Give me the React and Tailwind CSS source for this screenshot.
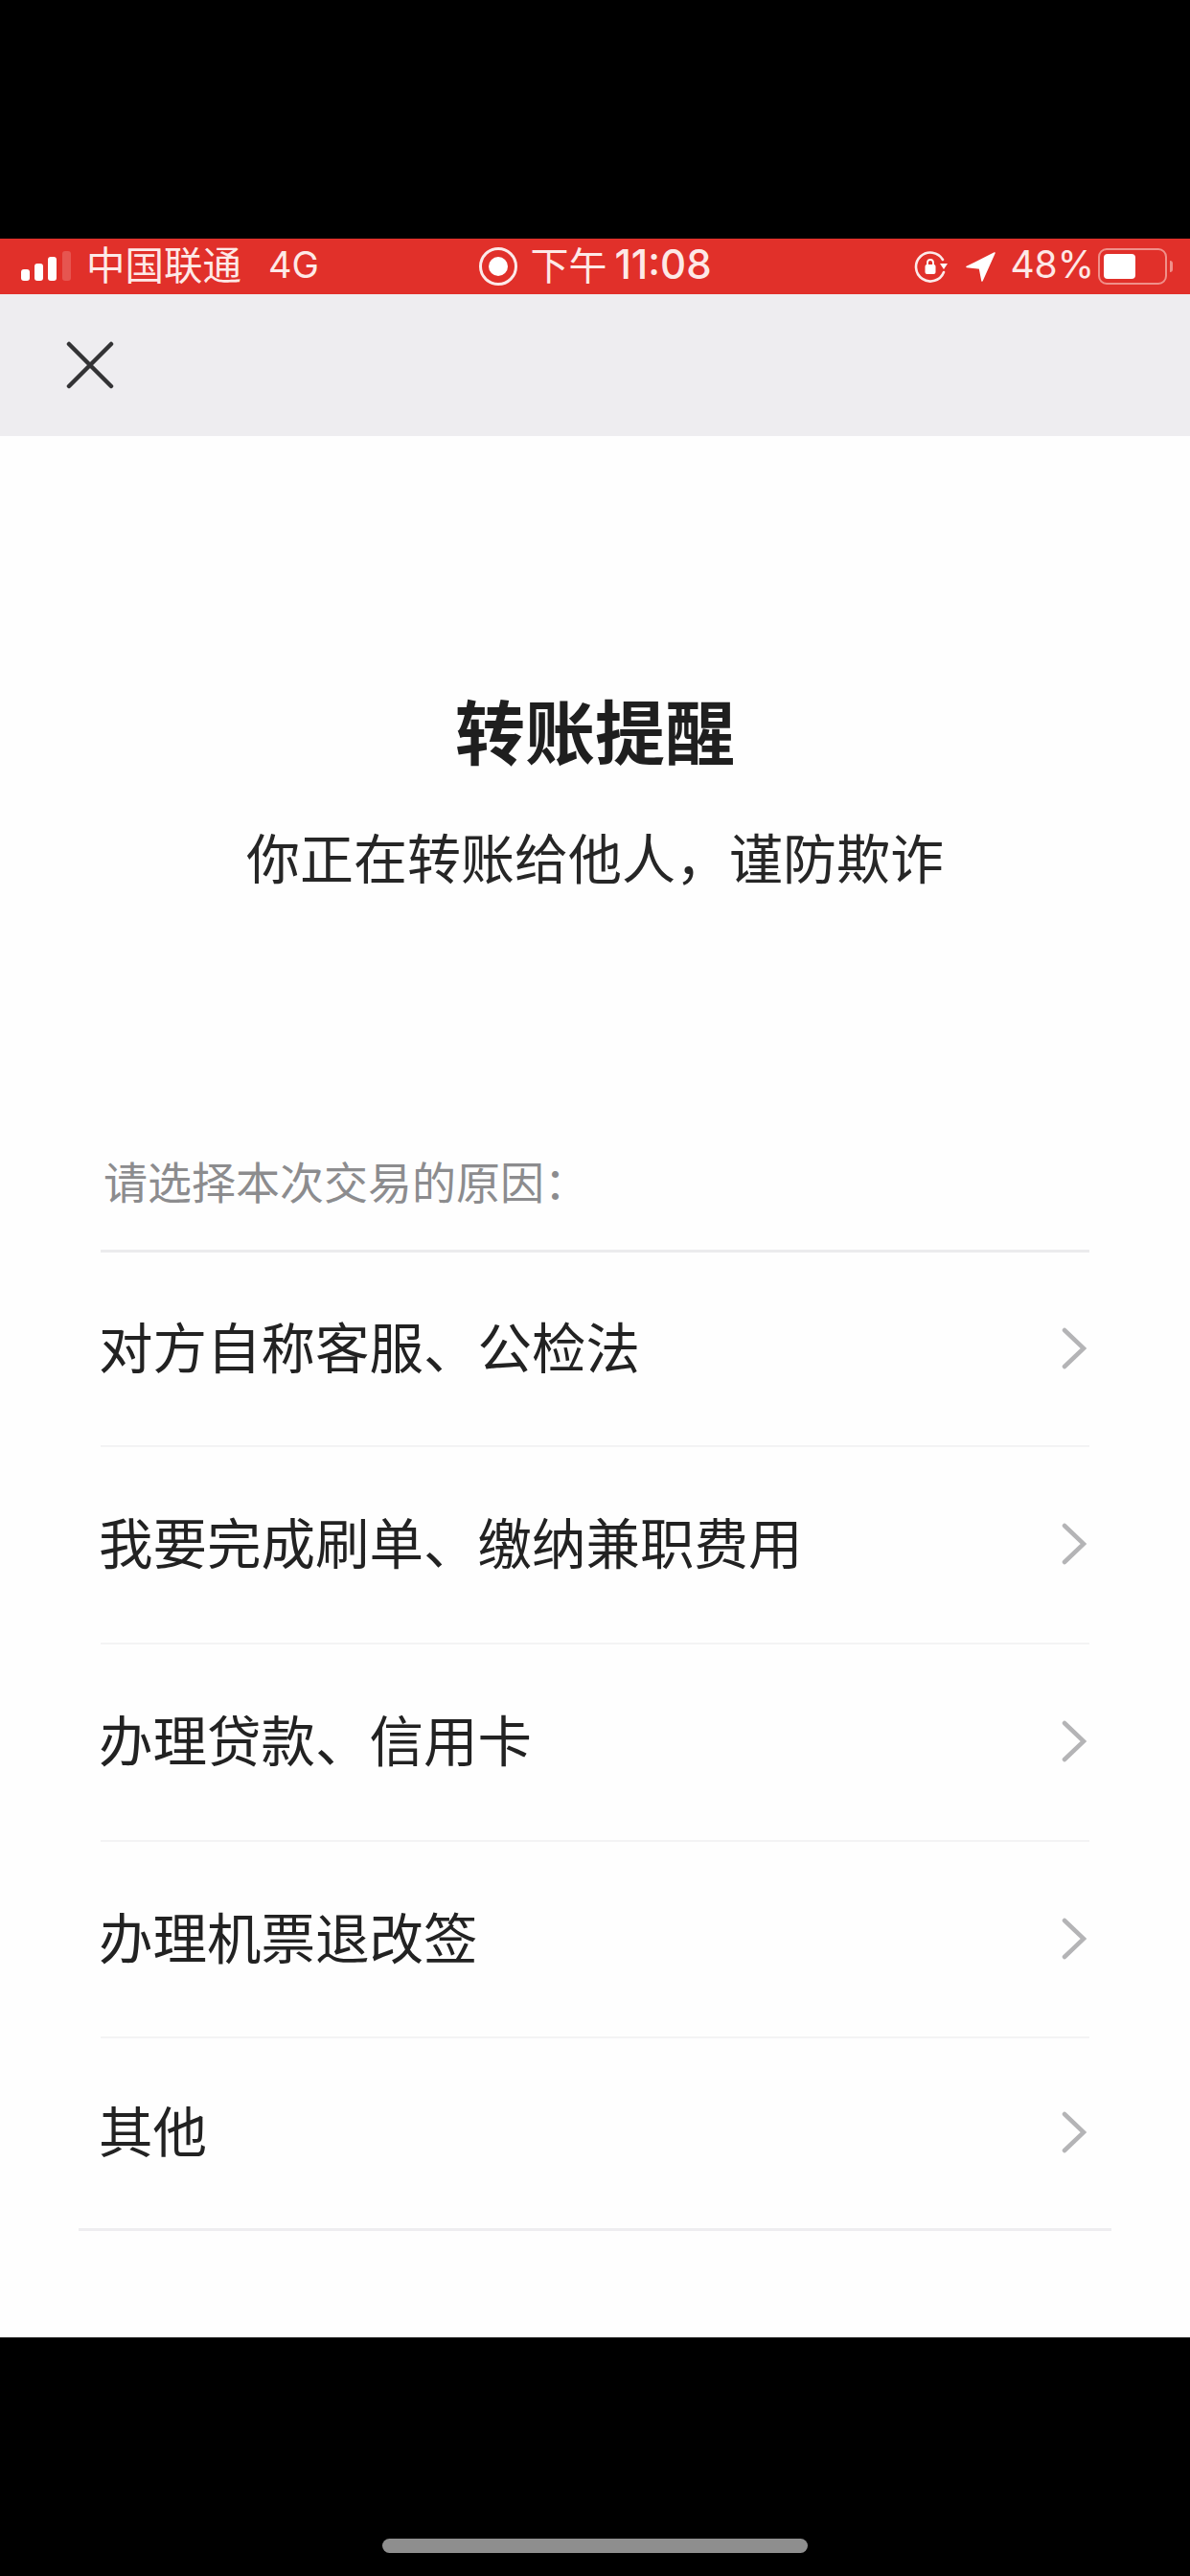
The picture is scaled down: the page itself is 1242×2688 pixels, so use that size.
const font = { fontFamily: '"Noto Sans CJK SC", "Noto Sans", sans-serif' };
const digits = { fontFamily: 'Inter, "Noto Sans CJK SC", sans-serif' };

const rows = [
  { label: "对方自称客服、公检法", cls: "h-[203px] border-b-2" },
  { label: "我要完成刷单、缴纳兼职费用", cls: "h-[206px] border-b-2" },
  { label: "办理贷款、信用卡", cls: "h-[206px] border-b-2" },
  { label: "办理机票退改签", cls: "h-[205px] border-b-2" },
  { label: "其他", cls: "h-[198px]" },
];

function Signal() {
  return (
    <svg width="56" height="32" viewBox="0 0 56 32">
      <rect x="0" y="19" width="9" height="12" rx="3" fill="#fff" />
      <rect x="14" y="13" width="9" height="18" rx="3" fill="#fff" />
      <rect x="28" y="6" width="9" height="25" rx="3" fill="#fff" />
      <rect x="43" y="0" width="9" height="31" rx="3" fill="#fff" fillOpacity="0.18" />
    </svg>
  );
}

function RecordIcon() {
  return (
    <svg width="42" height="42" viewBox="0 0 42 42">
      <circle cx="21" cy="21" r="18.5" fill="none" stroke="#fff" strokeWidth="3" strokeOpacity="0.9" />
      <circle cx="21" cy="21" r="10" fill="#fff" />
    </svg>
  );
}

function RotationLock() {
  return (
    <svg width="36" height="36" viewBox="0 0 36 36">
      <path d="M31 24a15 15 0 1 1-1-13" fill="none" stroke="#fff" strokeWidth="2.6" strokeLinecap="round" strokeOpacity="0.9" />
      <path d="M27 15h8l-4 6z" fill="#fff" />
      <rect x="11.5" y="16" width="11" height="10" rx="2" fill="#fff" />
      <path d="M14 17v-3a3 3 0 0 1 6 0v3" fill="none" stroke="#fff" strokeWidth="1.8" />
    </svg>
  );
}

function Arrow() {
  return (
    <svg width="31" height="31" viewBox="0 0 31 31">
      <path d="M30 1 1 15.5l13.5 1.5L17 30z" fill="#fff" stroke="#fff" strokeWidth="1.5" strokeLinejoin="round" />
    </svg>
  );
}

function Battery() {
  return (
    <div className="flex items-center">
      <div className="flex h-[38px] w-[72px] items-stretch rounded-[9px] border-2 border-[#f0908a] p-[4px]">
        <div className="w-[33px] rounded-[4px] bg-white" />
      </div>
      <div className="ml-[3px] h-[12px] w-[3px] rounded-r-sm bg-[#f0908a]" />
    </div>
  );
}

function Chevron() {
  return (
    <svg width="26" height="44" viewBox="0 0 26 44" className="mb-[2px] text-[#b4b4b6]">
      <path d="M3 3 23 22 3 41" fill="none" stroke="currentColor" strokeWidth="4.5" strokeLinecap="round" strokeLinejoin="miter" />
    </svg>
  );
}

function Close() {
  return (
    <svg width="50" height="50" viewBox="0 0 50 50" className="text-[#333335]">
      <path d="M3 3 47 47M47 3 3 47" fill="none" stroke="currentColor" strokeWidth="4.5" strokeLinecap="round" />
    </svg>
  );
}

export default function App() {
  return (
    <div className="flex h-[2688px] w-[1242px] flex-col overflow-hidden bg-black" style={font}>
      <div className="h-[249px] shrink-0" />

      <div className="grid h-[58px] shrink-0 grid-cols-[1fr_auto_1fr] items-center bg-[#e1302a] text-[#fde9e7]">
        <div className="flex items-center pl-[22px]">
          <Signal />
          <span className="mb-[6px] ml-[12px] text-[40.5px] leading-[52px]">中国联通</span>
          <span className="mb-[4px] ml-[28px] text-[38px] leading-[52px]" style={digits}>4G</span>
        </div>
        <div className="flex items-center">
          <RecordIcon />
          <span className="mb-[6px] ml-[12px] text-[40px] leading-[52px]">下午</span>
          <span className="mb-[4px] ml-[8px] text-[42px] leading-[52px] font-medium" style={digits}>11:08</span>
        </div>
        <div className="flex items-center justify-end pr-[18px]">
          <RotationLock />
          <div className="ml-[18px]"><Arrow /></div>
          <span className="mb-[4px] ml-[15px] text-[39px] leading-[52px]" style={digits}>48%</span>
          <div className="ml-[4px]"><Battery /></div>
        </div>
      </div>

      <div className="flex h-[148px] shrink-0 items-center bg-[#eeedf0] pl-[69px]">
        <Close />
      </div>

      <div className="flex h-[1984px] shrink-0 flex-col bg-[#fefefe]">
        <h1 className="mt-[269px] text-center text-[73px] leading-[72px] font-bold text-[#1f1f1f]">转账提醒</h1>
        <p className="mt-[69px] text-center text-[56px] leading-[56px] text-[#262626]">你正在转账给他人，谨防欺诈</p>

        <p className="mt-[287px] pl-[108px] text-[46px] leading-[46px] text-[#8c8c8e]">请选择本次交易的原因：</p>

        <div className="mx-[82px] mt-[50px] border-b-[3px] border-[#eeedf0]">
          <div className="mx-[23px] border-t-[3px] border-[#ebebed]">
            {rows.map((row) => (
              <div
                key={row.label}
                className={`flex items-center justify-between border-[#f3f3f4] pr-[3px] ${row.cls}`}
              >
                <span className="mb-[9px] -ml-[2px] text-[56.5px] leading-[57px] text-[#222222]">{row.label}</span>
                <Chevron />
              </div>
            ))}
          </div>
        </div>
      </div>

      <div className="flex flex-1 justify-center">
        <div className="mt-[210px] h-[15px] w-[444px] rounded-full bg-[#8e8e8e]" />
      </div>
    </div>
  );
}
